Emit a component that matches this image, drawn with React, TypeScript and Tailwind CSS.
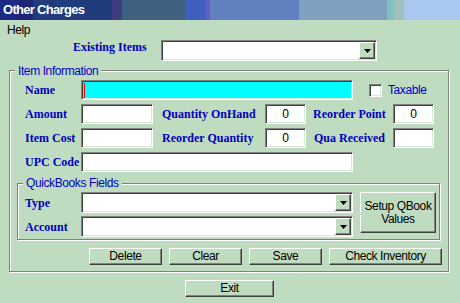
const sunken =
  "border border-t-[#808080] border-l-[#808080] border-b-white border-r-white shadow-[inset_1px_1px_0_#404040,inset_-1px_-1px_0_#d8e8d8]";
const raised =
  "border border-t-white border-l-white border-b-[#404040] border-r-[#404040] shadow-[inset_-1px_-1px_0_#808080] bg-[#c0dcc0]";
const etched = "border border-[#808080] shadow-[inset_1px_1px_0_#ffffff,1px_1px_0_#ffffff]";
const lbl = "font-['Liberation_Serif',serif] font-bold text-[12px] leading-[20px] text-[#0000c0] whitespace-nowrap tracking-normal";
const legend = "absolute px-[3px] bg-[#c0dcc0] text-[#0000c0] leading-[13px] whitespace-nowrap";

function Combo({ className = "" }: { className?: string }) {
  return (
    <div className={`${sunken} bg-white h-[21px] flex justify-end p-[1px] ${className}`}>
      <div className={`${raised} w-[16px] h-full flex items-center justify-center`}>
        <svg width="7" height="4" viewBox="0 0 7 4">
          <path d="M0 0h7L3.5 4z" fill="#000" />
        </svg>
      </div>
    </div>
  );
}

function Button({ className = "", children }: { className?: string; children: React.ReactNode }) {
  return (
    <div className={`${raised} h-[17px] flex items-center justify-center leading-[15px] ${className}`}>
      {children}
    </div>
  );
}

function NumField({ value }: { value?: string }) {
  return (
    <div className={`${sunken} bg-white w-[41px] h-[20px] flex items-center justify-center leading-[18px]`}>
      {value}
    </div>
  );
}

export default function App() {
  return (
    <div className="w-[460px] h-[303px] overflow-hidden bg-[#c0dcc0] text-black font-['Liberation_Sans',Arial,sans-serif] text-[12px] tracking-[-0.4px]">
      <div className="h-[20px] flex items-center pl-[3px] text-white font-bold text-[13px] tracking-[-0.7px] bg-[linear-gradient(90deg,#1c2a84_0px,#1c2a84_18px,#1e2674_18px,#1e2674_33px,#203c7c_33px,#203c7c_112px,#403c80_112px,#403c80_122px,#406080_122px,#406080_185px,#4060c0_185px,#4060c0_206px,#6060c8_206px,#6060c8_210px,#6080c0_210px,#6080c0_299px,#80a0c0_299px,#80a0c0_387px,#80c0c0_387px,#80c0c0_394px,#a0c0c0_394px,#a0c0c0_404px,#a8c8f0_404px)]">
        Other Charges
      </div>
      <div className="h-[20px] leading-[20px] pl-[7px]">Help</div>
      <div className="h-[21px] flex items-start">
        <div className={`${lbl} !leading-[14px] w-[161px] pl-[73px]`}>Existing Items</div>
        <Combo className="w-[216px]" />
      </div>

      <div className={`${etched} relative ml-[9px] mt-[9px] w-[440px] h-[202px] pt-[9px]`}>
        <span className={`${legend} left-[5px] top-[-6px]`}>Item Information</span>

        <div className="flex flex-col gap-[4px] pl-[15px]">
          <div className="flex h-[20px] items-center">
            <div className={`${lbl} w-[56px]`}>Name</div>
            <div className={`${sunken} bg-[#00ffff] w-[272px] h-[20px] flex items-center pl-[2px]`}>
              <span className="w-[1px] h-[15px] bg-[#ff0000]" />
            </div>
            <div className={`${sunken} bg-white w-[13px] h-[13px] ml-[16px]`} />
            <div className="ml-[6px] text-[#0000c0] leading-[13px]">Taxable</div>
          </div>

          <div className="flex h-[20px] items-center">
            <div className={`${lbl} w-[56px]`}>Amount</div>
            <div className={`${sunken} bg-white w-[72px] h-[20px]`} />
            <div className={`${lbl} ml-[9px] w-[103px]`}>Quantity OnHand</div>
            <NumField value="0" />
            <div className={`${lbl} ml-[7px] w-[80px]`}>Reorder Point</div>
            <NumField value="0" />
          </div>

          <div className="flex h-[20px] items-center">
            <div className={`${lbl} w-[56px]`}>Item Cost</div>
            <div className={`${sunken} bg-white w-[72px] h-[20px]`} />
            <div className={`${lbl} ml-[9px] w-[103px]`}>Reorder Quantity</div>
            <NumField value="0" />
            <div className={`${lbl} ml-[8px] w-[79px]`}>Qua Received</div>
            <NumField />
          </div>

          <div className="flex h-[20px] items-center">
            <div className={`${lbl} w-[56px]`}>UPC Code</div>
            <div className={`${sunken} bg-white w-[272px] h-[20px]`} />
          </div>
        </div>

        <div className={`${etched} relative ml-[7px] mt-[11px] w-[423px] h-[57px] pt-[8px] flex`}>
          <span className={`${legend} left-[5px] top-[-7px]`}>QuickBooks Fields</span>
          <div className="flex flex-col gap-[3px] pl-[7px]">
            <div className="flex h-[21px] items-center">
              <div className={`${lbl} w-[56px]`}>Type</div>
              <Combo className="w-[272px]" />
            </div>
            <div className="flex h-[21px] items-center">
              <div className={`${lbl} w-[56px]`}>Account</div>
              <Combo className="w-[272px]" />
            </div>
          </div>
          <div className={`${raised} ml-[7px] w-[76px] h-[41px] flex items-center justify-center text-center leading-[13px]`}>
            Setup QBook
            <br />
            Values
          </div>
        </div>

        <div className="flex gap-[7px] ml-[79px] mt-[8px]">
          <Button className="w-[73px]">Delete</Button>
          <Button className="w-[73px]">Clear</Button>
          <Button className="w-[73px]">Save</Button>
          <Button className="w-[113px]">Check Inventory</Button>
        </div>
      </div>

      <Button className="ml-[185px] mt-[8px] w-[89px]">Exit</Button>
    </div>
  );
}
